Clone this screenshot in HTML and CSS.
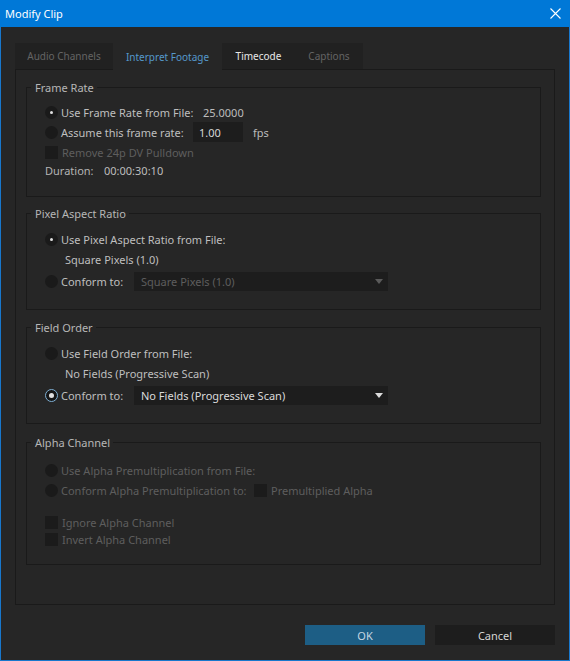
FILE: index.html
```html
<!DOCTYPE html>
<html>
<head>
<meta charset="utf-8">
<title>Modify Clip</title>
<link rel="stylesheet" href="styles.css">
</head>
<body>
<div class="window">
  <div class="titlebar">
    <span class="title">Modify Clip</span>
    <svg class="close" width="11" height="11" viewBox="0 0 11 11"><path d="M0.5 0.5 L10.5 10.5 M10.5 0.5 L0.5 10.5" stroke="#ffffff" stroke-width="1.1" fill="none"/></svg>
  </div>
  <div class="content">
    <div class="tabs">
      <div class="tab tab-audio disabled">Audio Channels</div>
      <div class="tab tab-interpret active">Interpret Footage</div>
      <div class="tab tab-timecode">Timecode</div>
      <div class="tab tab-captions disabled">Captions</div>
    </div>
    <div class="panel">
      <fieldset class="group g-frame">
        <legend>Frame Rate</legend>
        <div class="gbody pt7">
          <div class="row h20">
            <span class="radio checked"></span>
            <span class="label w142">Use Frame Rate from File:</span>
            <span class="value">25.0000</span>
          </div>
          <div class="row h20">
            <span class="radio"></span>
            <span class="label w132">Assume this frame rate:</span>
            <span class="input">1.00</span>
            <span class="unit">fps</span>
          </div>
          <div class="row h19 mt1">
            <span class="check"></span>
            <span class="label dim">Remove 24p DV Pulldown</span>
          </div>
          <div class="row h16">
            <span class="plain w59">Duration:</span>
            <span class="value">00:00:30:10</span>
          </div>
        </div>
      </fieldset>

      <fieldset class="group g-par">
        <legend>Pixel Aspect Ratio</legend>
        <div class="gbody pt8">
          <div class="row h20">
            <span class="radio checked"></span>
            <span class="label">Use Pixel Aspect Ratio from File:</span>
          </div>
          <div class="row h20">
            <span class="indent">Square Pixels (1.0)</span>
          </div>
          <div class="row h19 mt3">
            <span class="radio"></span>
            <span class="label w73">Conform to:</span>
            <span class="select disabled"><span>Square Pixels (1.0)</span><span class="arrow"></span></span>
          </div>
        </div>
      </fieldset>

      <fieldset class="group g-field">
        <legend>Field Order</legend>
        <div class="gbody pt8">
          <div class="row h20">
            <span class="radio"></span>
            <span class="label">Use Field Order from File:</span>
          </div>
          <div class="row h20">
            <span class="indent">No Fields (Progressive Scan)</span>
          </div>
          <div class="row h19 mt3">
            <span class="radio checked focus"></span>
            <span class="label w73">Conform to:</span>
            <span class="select"><span>No Fields (Progressive Scan)</span><span class="arrow"></span></span>
          </div>
        </div>
      </fieldset>

      <fieldset class="group g-alpha">
        <legend>Alpha Channel</legend>
        <div class="gbody pt10">
          <div class="row h20">
            <span class="radio"></span>
            <span class="label dim">Use Alpha Premultiplication from File:</span>
          </div>
          <div class="row h20">
            <span class="radio"></span>
            <span class="label dim w193">Conform Alpha Premultiplication to:</span>
            <span class="check"></span>
            <span class="label dim">Premultiplied Alpha</span>
          </div>
          <div class="row h17 mt14">
            <span class="check"></span>
            <span class="label dim">Ignore Alpha Channel</span>
          </div>
          <div class="row h17">
            <span class="check"></span>
            <span class="label dim">Invert Alpha Channel</span>
          </div>
        </div>
      </fieldset>
    </div>
    <div class="buttons">
      <div class="btn btn-ok">OK</div>
      <div class="btn btn-cancel">Cancel</div>
    </div>
  </div>
</div>
</body>
</html>
```
FILE: styles.css
```css
html, body {
  margin: 0;
  padding: 0;
  background: #262626;
}
body {
  font-family: "Noto Sans", "Open Sans", sans-serif;
  font-size: 11px;
  color: #bcbcbc;
}
.window {
  width: 570px;
  height: 661px;
  box-sizing: border-box;
  border: 1px solid #1877cc;
  border-top: none;
  background: #262626;
  display: flex;
  flex-direction: column;
}
.titlebar {
  height: 27px;
  flex: none;
  background: #0078d7;
  display: flex;
  align-items: center;
  justify-content: space-between;
  padding: 0 9px 0 5px;
  margin: 0 -1px;
}
.title {
  color: #ffffff;
  font-size: 11px;
  line-height: 14px;
  margin-top: 1px;
}
.close {
  display: block;
  margin-top: -1px;
}
.content {
  padding: 16px 14px 0 14px;
  display: flex;
  flex-direction: column;
}
.tabs {
  display: flex;
  height: 26px;
}
.tab {
  display: flex;
  align-items: center;
  justify-content: center;
  background: #212121;
  color: #d2d2d2;
  height: 26px;
  font-size: 10px;
}
.tab-audio { width: 98px; }
.tab-interpret { width: 109px; }
.tab-timecode { width: 73px; color: #e8e8e8; }
.tab-captions { width: 68px; }
.tab.disabled { color: #646464; }
.tab.active {
  background: #262626;
  color: #5598cb;
  position: relative;
  z-index: 1;
  height: 27px;
  margin-bottom: -1px;
}
.panel {
  height: 536px;
  box-sizing: border-box;
  border: 1px solid #1a1a1a;
  padding: 9px 13px 0 10px;
  display: flex;
  flex-direction: column;
}
.group {
  margin: 0;
  padding: 0;
  border: 1px solid #1a1a1a;
  box-sizing: border-box;
  min-width: 0;
}
.group legend {
  margin-left: 4px;
  padding: 0 3px 0 4px;
  line-height: 17px;
  color: #b6b6b6;
}
.g-frame { height: 118px; }
.g-par { height: 105px; margin-top: 8px; }
.g-field { height: 105px; margin-top: 9px; }
.g-alpha { height: 131px; margin-top: 10px; }
.gbody {
  padding-left: 18px;
  display: flex;
  flex-direction: column;
}
.pt7 { padding-top: 6px; }
.pt8 { padding-top: 7px; }
.pt10 { padding-top: 9px; }
.row {
  display: flex;
  align-items: center;
}
.h16 { height: 16px; }
.h17 { height: 17px; }
.h19 { height: 19px; }
.h20 { height: 20px; }
.mt1 { margin-top: 1px; }
.mt3 { margin-top: 3px; }
.mt14 { margin-top: 14px; }
.radio {
  width: 13px;
  height: 13px;
  border-radius: 50%;
  background: #1a1a1a;
  flex: none;
  display: flex;
  align-items: center;
  justify-content: center;
  box-sizing: border-box;
}
.radio.checked::after {
  content: "";
  width: 3px;
  height: 3px;
  border-radius: 50%;
  background: #e0e0e0;
}
.radio.focus {
  border: 1px solid #7fb0d4;
  background: #161616;
}
.radio.focus::after {
  width: 5px;
  height: 5px;
}
.check {
  width: 13px;
  height: 13px;
  background: #1b1b1b;
  flex: none;
  margin-right: 4px;
}
.radio + .label {
  margin-left: 3px;
}
.label {
  white-space: nowrap;
  color: #bfbfbf;
}
.label.dim, .dim { color: #5e5e5e; }
.w59 { width: 59px; }
.w73 { width: 73px; flex: none; }
.w132 { width: 132px; flex: none; }
.w142 { width: 142px; flex: none; }
.w193 { width: 193px; flex: none; }
.plain {
  color: #b4b4b4;
  flex: none;
}
.value {
  color: #bdbdbd;
}
.indent {
  margin-left: 20px;
  color: #bfbfbf;
}
.input {
  width: 50px;
  height: 20px;
  box-sizing: border-box;
  background: #1d1d1d;
  color: #d6d6d6;
  padding-left: 6px;
  display: flex;
  align-items: center;
}
.unit {
  margin-left: 10px;
  color: #bcbcbc;
}
.select {
  width: 254px;
  height: 19px;
  box-sizing: border-box;
  background: #1d1d1d;
  color: #dadada;
  padding: 0 5px 0 7px;
  display: flex;
  align-items: center;
  justify-content: space-between;
}
.select .arrow {
  width: 0;
  height: 0;
  border-left: 4px solid transparent;
  border-right: 4px solid transparent;
  border-top: 5px solid #dcdcdc;
}
.select.disabled { color: #5e5e5e; }
.select.disabled .arrow { border-top-color: #5a5a5a; }
.buttons {
  margin-top: 20px;
  display: flex;
  justify-content: flex-end;
  gap: 10px;
}
.btn {
  width: 120px;
  height: 20px;
  display: flex;
  align-items: center;
  justify-content: center;
}
.btn-ok {
  background: #1d5e85;
  color: #c6d6e2;
}
.btn-cancel {
  background: #1d1d1d;
  color: #d6d6d6;
}
```
